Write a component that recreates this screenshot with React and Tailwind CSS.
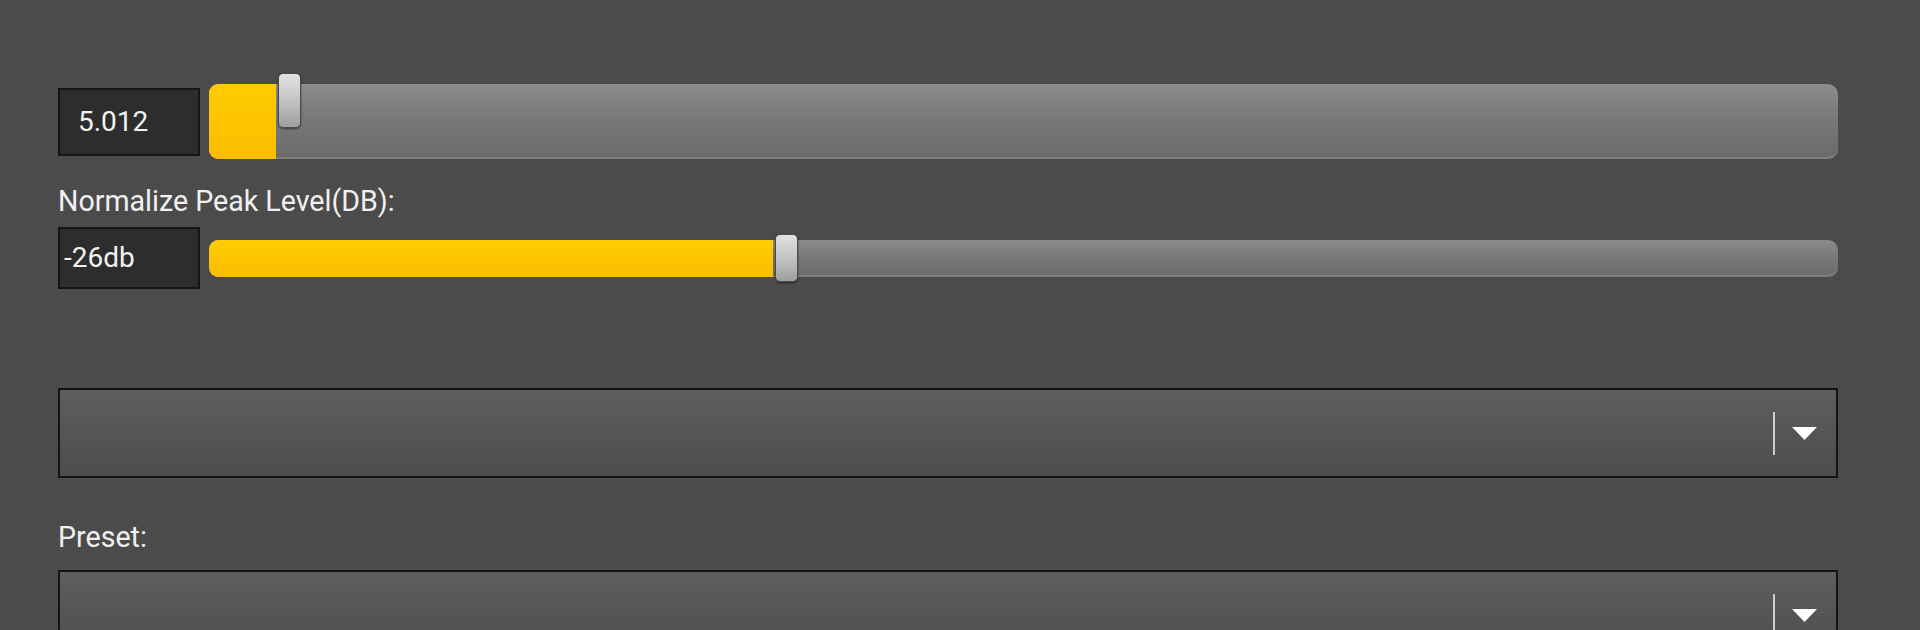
import React from "react";

function ValueBox({ value, pad, height }) {
  return (
    <div
      className={`w-[142px] shrink-0 flex items-center bg-[#2d2d2d] border-2 border-[#151515] text-[28px] text-[#f2f2f2] leading-none ${pad} ${height}`}
    >
      {value}
    </div>
  );
}

function Slider({ fill, height, thumbTop, thumbHeight }) {
  return (
    <div
      className={`relative flex-1 rounded-[10px] bg-gradient-to-b from-[#8c8c8c] via-[#777777] to-[#6a6a6a] shadow-[inset_0_-2px_0_#7e7e7e] ${height}`}
    >
      <div
        className="absolute left-0 top-0 bottom-0 rounded-l-[9px] bg-gradient-to-b from-[#ffcc00] to-[#f9bd00]"
        style={{ width: fill }}
      />
      <div
        className={`absolute w-[23px] rounded-[5px] border border-[#4a4a4a] bg-gradient-to-b from-[#e2e2e2] via-[#c4c4c4] to-[#9e9e9e] shadow-[0_1px_2px_rgba(0,0,0,0.5)] ${thumbTop} ${thumbHeight}`}
        style={{ left: fill + 2 }}
      />
    </div>
  );
}

function Dropdown({ height }) {
  return (
    <div
      className={`flex items-center justify-end border-2 border-[#141414] bg-gradient-to-b from-[#5e5e5e] to-[#4c4c4c] ${height}`}
    >
      <div className="w-[2px] h-[43px] bg-[#cfcfcf]" />
      <svg width="25" height="13" viewBox="0 0 25 13" className="ml-[17px] mr-[19px]">
        <polygon points="0,0 25,0 12.5,13" fill="#ffffff" />
      </svg>
    </div>
  );
}

export default function App() {
  return (
    <div className="w-[1920px] h-[630px] overflow-hidden bg-[#4b4b4b] font-['Roboto',sans-serif] pl-[58px] pr-[82px] pt-[84px]">
      <div className="flex items-center gap-[9px]">
        <ValueBox value="5.012" pad="pl-[18px]" height="h-[68px]" />
        <Slider fill={67} height="h-[75px]" thumbTop="-top-[11px]" thumbHeight="h-[55px]" />
      </div>

      <div className="mt-[26px] text-[28.6px] leading-[33px] text-[#f0f0f0]">
        Normalize Peak Level(DB):
      </div>

      <div className="mt-[9px] flex items-center gap-[9px]">
        <ValueBox value="-26db" pad="pl-[4px]" height="h-[62px]" />
        <Slider fill={564} height="h-[37px]" thumbTop="-top-[6px]" thumbHeight="h-[48px]" />
      </div>

      <div className="mt-[99px]">
        <Dropdown height="h-[90px]" />
      </div>

      <div className="mt-[43px] text-[28.6px] leading-[33px] text-[#f0f0f0]">Preset:</div>

      <div className="mt-[16px]">
        <Dropdown height="h-[90px]" />
      </div>
    </div>
  );
}
